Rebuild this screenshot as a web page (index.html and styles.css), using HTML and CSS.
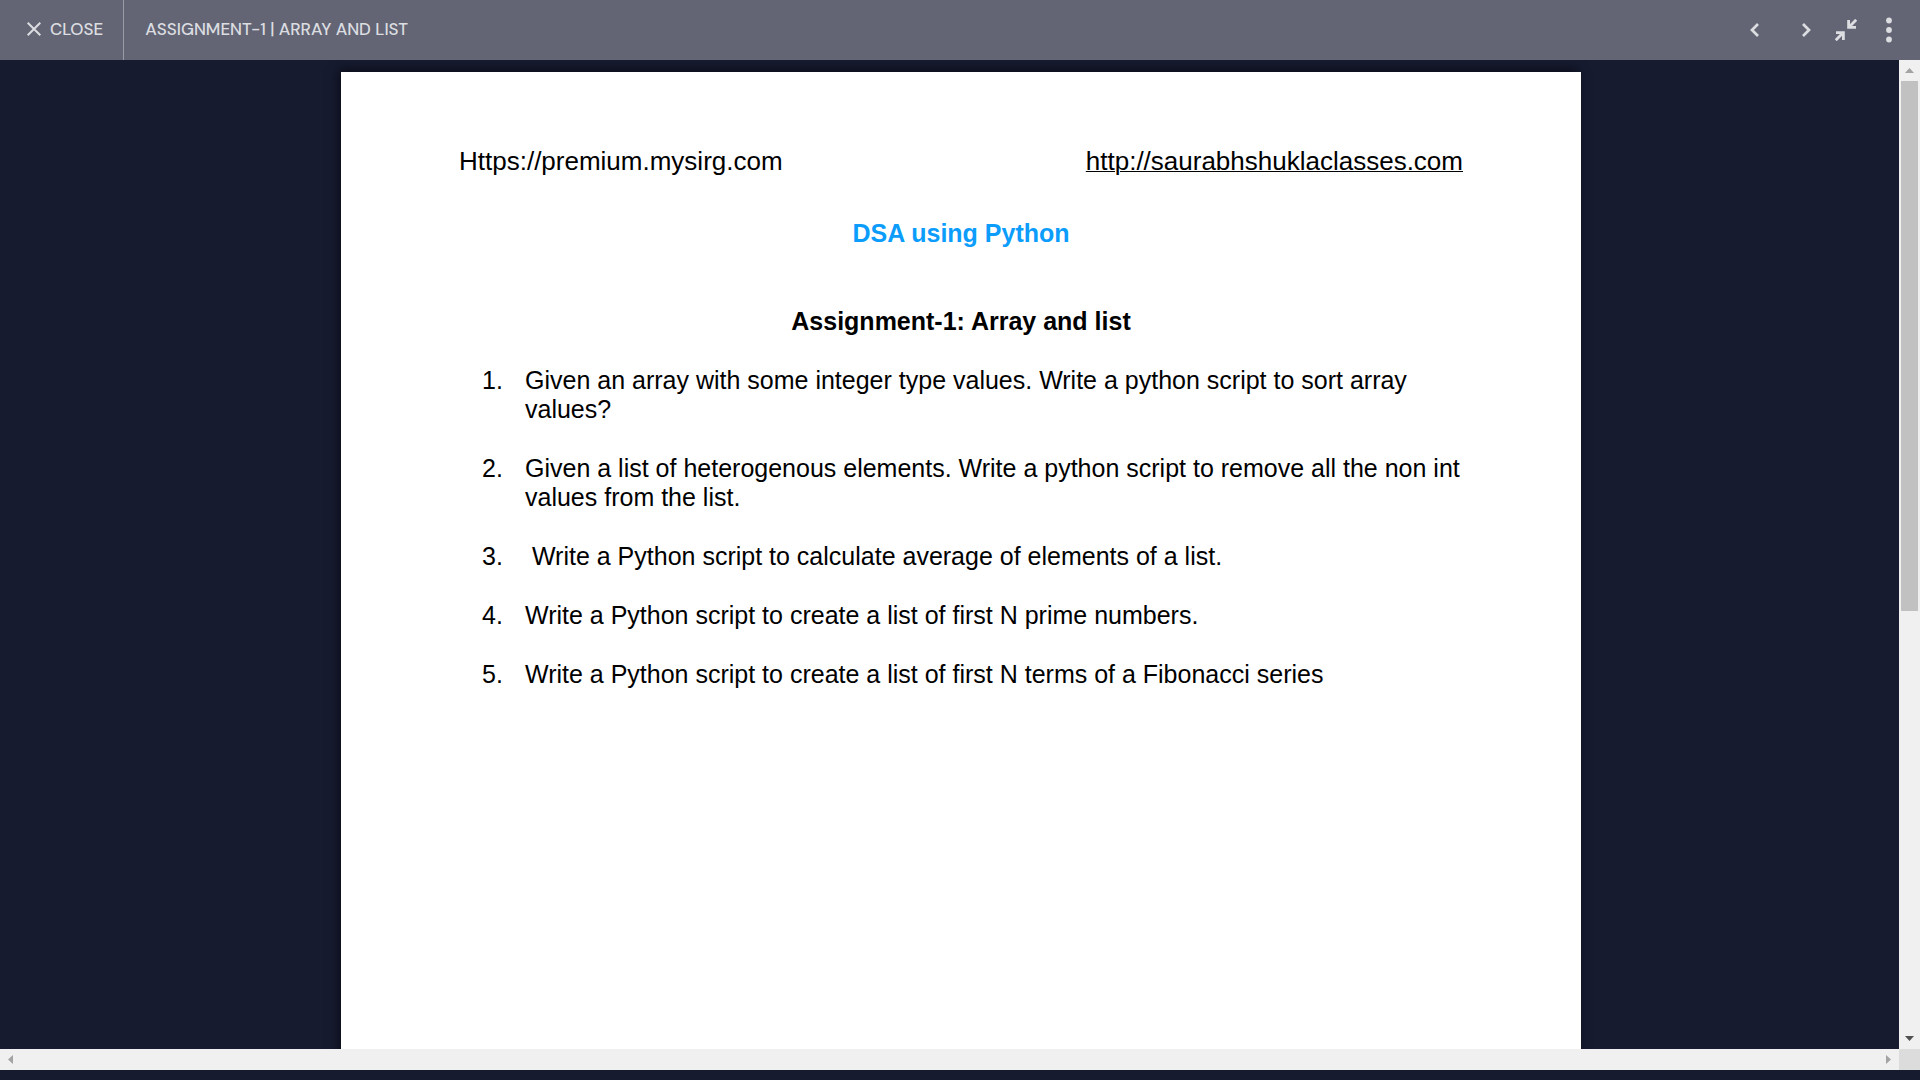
FILE: index.html
```html
<!DOCTYPE html>
<html lang="en">
<head>
<meta charset="utf-8">
<title>Assignment-1 | Array and list</title>
<link rel="stylesheet" href="styles.css">
</head>
<body>
<header class="topbar">
  <button class="close" type="button">
    <svg width="14" height="14" viewBox="0 0 14 14" fill="none" stroke="currentColor" stroke-width="2" aria-hidden="true"><path d="M.7.7l12.6 12.6M13.3.7L.7 13.3"/></svg>
    <span>CLOSE</span>
  </button>
  <h1 class="topbar-title">ASSIGNMENT-1 | ARRAY AND LIST</h1>
  <div class="actions">
    <div class="pager">
      <button class="icon-btn" type="button" aria-label="Previous">
        <svg width="10" height="14" viewBox="0 0 10 14" fill="none" stroke="currentColor" stroke-width="2.7" aria-hidden="true"><path d="M8 1L2 7l6 6"/></svg>
      </button>
      <button class="icon-btn" type="button" aria-label="Next">
        <svg width="10" height="14" viewBox="0 0 10 14" fill="none" stroke="currentColor" stroke-width="2.7" aria-hidden="true"><path d="M2 1l6 6-6 6"/></svg>
      </button>
    </div>
    <button class="icon-btn" type="button" aria-label="Exit full screen">
      <svg width="22" height="22" viewBox="0 0 22 22" fill="none" stroke="currentColor" stroke-width="2.8" aria-hidden="true"><path d="M13.600 1v7.400H21M13.600 8.400L21.200.8M1 13.600h7.400V21M8.400 13.600L.8 21.200"/></svg>
    </button>
    <button class="icon-btn" type="button" aria-label="More options">
      <svg width="6" height="26" viewBox="0 0 6 26" fill="currentColor" aria-hidden="true"><circle cx="3" cy="3.500" r="2.900"/><circle cx="3" cy="13" r="2.900"/><circle cx="3" cy="22.500" r="2.900"/></svg>
    </button>
  </div>
</header>
<main class="viewer">
  <div class="pane">
    <article class="sheet">
      <div class="sheet-head">
        <span>Https://premium.mysirg.com</span>
        <a href="http://saurabhshuklaclasses.com">http://saurabhshuklaclasses.com</a>
      </div>
      <h2 class="course">DSA using Python</h2>
      <h3 class="assignment">Assignment-1: Array and list</h3>
      <ol class="questions">
        <li>Given an array with some integer type values. Write a python script to sort array values?</li>
        <li>Given a list of heterogenous elements. Write a python script to remove all the non int values from the list.</li>
        <li>&nbsp;Write a Python script to calculate average of elements of a list.</li>
        <li>Write a Python script to create a list of first N prime numbers.</li>
        <li>Write a Python script to create a list of first N terms of a Fibonacci series</li>
      </ol>
    </article>
  </div>
  <div class="scroll scroll-y">
    <button class="arrow" type="button" aria-label="Scroll up"><svg width="9" height="5" viewBox="0 0 9 5" aria-hidden="true"><path d="M0 5L4.500 0 9 5z" fill="#a3a3a3"/></svg></button>
    <div class="track"><div class="thumb"></div></div>
    <button class="arrow" type="button" aria-label="Scroll down"><svg width="9" height="5" viewBox="0 0 9 5" aria-hidden="true"><path d="M0 0h9L4.500 5z" fill="#505050"/></svg></button>
  </div>
  <div class="scroll scroll-x">
    <button class="arrow" type="button" aria-label="Scroll left"><svg width="5" height="9" viewBox="0 0 5 9" aria-hidden="true"><path d="M5 0v9L0 4.500z" fill="#a3a3a3"/></svg></button>
    <button class="arrow" type="button" aria-label="Scroll right"><svg width="5" height="9" viewBox="0 0 5 9" aria-hidden="true"><path d="M0 0v9l5-4.500z" fill="#a3a3a3"/></svg></button>
  </div>
  <div class="corner"></div>
</main>
</body>
</html>
```
FILE: styles.css
```css
* { box-sizing: border-box; }

body {
  margin: 0;
  height: 100vh;
  padding-bottom: 10px;
  display: flex;
  flex-direction: column;
  overflow: hidden;
  background: #161b30;
  font-family: "Liberation Sans", Arial, sans-serif;
}

button {
  margin: 0;
  padding: 0;
  border: 0;
  background: none;
  color: inherit;
  font: inherit;
  display: flex;
  align-items: center;
  justify-content: center;
}

/* Top bar */
.topbar {
  flex: none;
  height: 60px;
  display: flex;
  align-items: stretch;
  background: #636574;
  color: #dcdde1;
  font: 500 17px/24px "DM Sans", Roboto, sans-serif;
}

.close {
  gap: 9px;
  padding: 0 20px 2px 27px;
  border-right: 1px solid #9a9ba6;
}

.topbar-title {
  margin: 0;
  padding: 0 21px 2px;
  align-self: center;
  font: inherit;
}

.actions {
  margin-left: auto;
  padding-right: 11px;
  display: flex;
  gap: 3px;
}

.pager {
  display: flex;
  gap: 11px;
  margin-right: -3px;
}

.icon-btn { width: 40px; }

/* Document viewer */
.viewer {
  flex: 1;
  min-height: 0;
  display: grid;
  grid-template-columns: 1fr 21px;
  grid-template-rows: 1fr 21px;
}

.pane {
  min-height: 0;
  overflow: hidden;
  padding: 12px 0 0 23px;
}

.sheet {
  max-width: 1240px;
  min-height: 1600px;
  margin: 0 auto;
  padding: 75px 118px;
  background: #fff;
  box-shadow: -3px -3px 10px rgba(0, 0, 0, .5);
  color: #000;
  font-size: 25px;
  line-height: 29px;
}

.sheet-head {
  display: flex;
  justify-content: space-between;
  font-size: 26px;
}

.sheet-head a {
  color: inherit;
  text-decoration-thickness: 1px;
}

.course,
.assignment {
  font-size: 25px;
  text-align: center;
}

.course {
  margin: 43px 0 59px;
  color: #0c9dfc;
}

.assignment { margin: 0 0 30px; }

.questions {
  margin: 0;
  padding: 0;
  list-style: none;
  counter-reset: question;
}

.questions li {
  display: grid;
  grid-template-columns: 43px 1fr;
  padding-left: 23px;
  margin-bottom: 30px;
  counter-increment: question;
}

.questions li::before { content: counter(question) "."; }

/* Scroll bars */
.scroll {
  display: flex;
  background: #f0f0f0;
}

.scroll-y { flex-direction: column; }
.scroll-x { justify-content: space-between; }

.arrow {
  width: 21px;
  height: 21px;
}

.track {
  flex: 1;
  padding: 0 2px;
}

.thumb {
  height: 56%;
  background: #c1c1c1;
}

.corner { background: #dcdcdc; }
```
